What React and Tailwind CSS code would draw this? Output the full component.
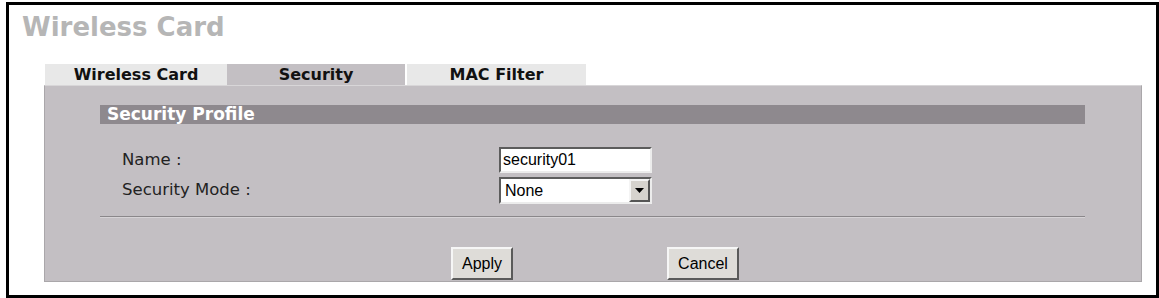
import React from "react";

const dejavu = { fontFamily: '"DejaVu Sans", Verdana, sans-serif' };
const arial = { fontFamily: '"Liberation Sans", Arial, sans-serif' };

function Tab({ label, active, className }) {
  return (
    <div
      className={
        "h-[21px] flex items-center justify-center text-[16px] font-bold leading-[21px] text-[#111] " +
        (active ? "bg-[#c3bfc3]" : "bg-[#e8e8e8]") +
        " " +
        className
      }
    >
      {label}
    </div>
  );
}

function SunkenBox({ children, className }) {
  return (
    <div
      className={
        "flex items-center bg-white border-2 border-t-[#5c5c5c] border-l-[#5c5c5c] border-b-[#ececec] border-r-[#ececec] " +
        className
      }
    >
      {children}
    </div>
  );
}

function Button({ label, className }) {
  return (
    <button
      className={
        "h-[33px] bg-[#dedcd8] border-2 border-t-[#f6f6f6] border-l-[#f6f6f6] border-b-[#5a5a5a] border-r-[#5a5a5a] text-[16px] text-black " +
        className
      }
      style={arial}
    >
      {label}
    </button>
  );
}

export default function App() {
  return (
    <div className="w-[1159px] h-[298px] bg-white">
      <div
        className="ml-[6px] mt-[2px] w-[1153px] h-[296px] border-[3px] border-black bg-white"
        style={dejavu}
      >
        {/* page title */}
        <h1 className="pt-[7px] pl-[13px] text-[26px] font-bold leading-[30px] text-[#b6b6b6]">
          Wireless Card
        </h1>

        {/* tabs */}
        <div className="mt-[22px] ml-[36px] flex">
          <Tab label="Wireless Card" className="w-[182px]" />
          <Tab label="Security" active className="w-[178px]" />
          <Tab label="MAC Filter" className="ml-[2px] w-[179px]" />
        </div>

        {/* panel */}
        <div className="ml-[35px] w-[1098px] h-[197px] bg-[#c3bfc3] border border-[#aaa7aa] border-t-[#d8d6d8] flex flex-col">
          <div className="mt-[19px] ml-[55px] w-[985px] h-[19px] bg-[#8e898e] pl-[7px] text-[17px] font-bold leading-[19px] text-white">
            Security Profile
          </div>

          <div className="mt-[23px] ml-[77px] flex items-center h-[26px]">
            <span className="w-[377px] text-[16.5px] text-[#222]">Name :</span>
            <SunkenBox className="w-[153px] h-[26px] pl-[2px]">
              <span className="text-[16px] text-black" style={arial}>
                security01
              </span>
            </SunkenBox>
          </div>

          <div className="mt-[4px] ml-[77px] flex items-center h-[27px]">
            <span className="w-[377px] text-[16.5px] text-[#222]">Security Mode :</span>
            <SunkenBox className="w-[153px] h-[27px] justify-between">
              <span className="pl-[4px] text-[16px] text-black" style={arial}>
                None
              </span>
              <span className="w-[21px] h-full flex items-center justify-center bg-[#d6d3ce] border-2 border-t-[#f4f4f4] border-l-[#f4f4f4] border-b-[#555] border-r-[#555]">
                <svg width="9" height="5" viewBox="0 0 9 5">
                  <path d="M0 0h9L4.5 5z" fill="#000" />
                </svg>
              </span>
            </SunkenBox>
          </div>

          <div className="mt-[12px] ml-[55px] w-[985px] border-t border-t-[#8a878a] border-b border-b-[#d6d3d6]" />

          <div className="mt-[29px] ml-[406px] flex gap-[154px]">
            <Button label="Apply" className="w-[62px]" />
            <Button label="Cancel" className="w-[72px]" />
          </div>
        </div>
      </div>
    </div>
  );
}
